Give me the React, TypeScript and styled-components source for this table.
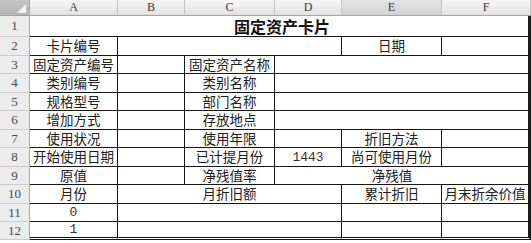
import React from 'react';
import styled, { createGlobalStyle, css } from 'styled-components';

const GlobalStyle = createGlobalStyle`
  html, body {
    margin: 0;
    padding: 0;
    background: #ffffff;
  }
  body {
    width: 531px;
    height: 243px;
    overflow: hidden;
    font-family: "Noto Sans CJK SC", "Noto Sans", sans-serif;
  }
`;

const Sheet = styled.div`
  display: grid;
  grid-template-columns: 30px 88px 67px 90px 67px 100px 89px;
  grid-template-rows: 16px 21px 19px 18px 19px 18px 19px 18px 19px 18px 19px 18px 18px;
  width: 531px;
`;

const Corner = styled.div`
  position: relative;
  background: linear-gradient(#c4c4c4, #b6b6b6);
  border-right: 1px solid #a9a9a9;
  border-bottom: 1px solid #a0a0a0;
  box-sizing: border-box;

  svg {
    position: absolute;
    right: 3px;
    bottom: 2px;
  }
`;

const ColHead = styled.div<{ $active?: boolean }>`
  display: flex;
  align-items: center;
  justify-content: center;
  box-sizing: border-box;
  background: ${(p) =>
    p.$active ? 'linear-gradient(#e4e4e4, #d2d2d2)' : 'linear-gradient(#f6f6f6, #e2e2e2)'};
  border-right: 1px solid #c4c4c4;
  border-bottom: 1px solid #a4a4a4;
  font-family: "Liberation Serif", serif;
  font-size: 12px;
  color: #3a3a3a;
`;

const RowHead = styled.div`
  display: flex;
  align-items: center;
  justify-content: center;
  box-sizing: border-box;
  background: #ececec;
  border-right: 1px solid #a9a9a9;
  border-bottom: 1px solid #cacaca;
  font-family: "Liberation Serif", serif;
  font-size: 13px;
  color: #4a4a4a;
`;

type Edge = 'none' | 'thin' | 'thick';

const Cell = styled.div<{ $span: number; $right: Edge; $last?: boolean; $title?: boolean; $mono?: boolean }>`
  grid-column: span ${(p) => p.$span};
  display: flex;
  align-items: center;
  justify-content: center;
  box-sizing: border-box;
  overflow: visible;
  white-space: nowrap;
  background: #ffffff;
  color: #202020;
  font-size: 13.5px;
  line-height: 1;
  border-bottom: ${(p) => (p.$last ? '3px double #111' : '1px solid #161616')};
  border-right: ${(p) =>
    p.$right === 'thick' ? '3px solid #1c1c1c' : p.$right === 'thin' ? '1px solid #161616' : 'none'};

  ${(p) =>
    p.$title &&
    css`
      font-size: 16px;
      font-weight: 700;
      color: #111;
      padding-left: 6px;
    `}

  ${(p) =>
    p.$mono &&
    css`
      font-family: "Liberation Mono", monospace;
      font-size: 13px;
      color: #333;
    `}
`;

type CellDef = { text?: string; span?: number; edge?: boolean; title?: boolean; mono?: boolean };

const columns = ['A', 'B', 'C', 'D', 'E', 'F'];

const rows: CellDef[][] = [
  [{ text: '固定资产卡片', span: 6, title: true }],
  [{ text: '卡片编号', edge: true }, { span: 3, edge: true }, { text: '日期', edge: true }, {}],
  [{ text: '固定资产编号', edge: true }, { edge: true }, { text: '固定资产名称', edge: true }, { span: 3 }],
  [{ text: '类别编号', edge: true }, { edge: true }, { text: '类别名称', edge: true }, { span: 3 }],
  [{ text: '规格型号', edge: true }, { edge: true }, { text: '部门名称', edge: true }, { span: 3 }],
  [{ text: '增加方式', edge: true }, { edge: true }, { text: '存放地点', edge: true }, { span: 3 }],
  [
    { text: '使用状况', edge: true },
    { edge: true },
    { text: '使用年限', edge: true },
    { edge: true },
    { text: '折旧方法', edge: true },
    {},
  ],
  [
    { text: '开始使用日期', edge: true },
    { edge: true },
    { text: '已计提月份', edge: true },
    { text: '1443', edge: true, mono: true },
    { text: '尚可使用月份', edge: true },
    {},
  ],
  [{ text: '原值', edge: true }, { edge: true }, { text: '净残值率', edge: true }, {}, { text: '净残值' }, {}],
  [{ text: '月份', edge: true }, { text: '月折旧额', span: 3, edge: true }, { text: '累计折旧', edge: true }, { text: '月末折余价值' }],
  [{ text: '0', edge: true, mono: true }, { span: 3, edge: true }, { edge: true }, {}],
  [{ text: '1', edge: true, mono: true }, { span: 3, edge: true }, { edge: true }, {}],
];

const App = () => {
  return (
    <>
      <GlobalStyle />
      <Sheet>
        <Corner>
          <svg width="9" height="9" viewBox="0 0 9 9">
            <polygon points="9,0 9,9 0,9" fill="#f2f2f2" />
          </svg>
        </Corner>
        {columns.map((c) => (
          <ColHead key={c} $active={c === 'E'}>
            {c}
          </ColHead>
        ))}

        {rows.map((row, r) => {
          let col = 0;
          return (
            <React.Fragment key={r}>
              <RowHead>{r + 1}</RowHead>
              {row.map((cell, i) => {
                const span = cell.span ?? 1;
                col += span;
                const right: Edge = col === 6 ? 'thick' : cell.edge ? 'thin' : 'none';
                return (
                  <Cell
                    key={i}
                    $span={span}
                    $right={right}
                    $last={r === rows.length - 1}
                    $title={cell.title}
                    $mono={cell.mono}
                  >
                    {cell.text}
                  </Cell>
                );
              })}
            </React.Fragment>
          );
        })}
      </Sheet>
    </>
  );
};

export default App;
